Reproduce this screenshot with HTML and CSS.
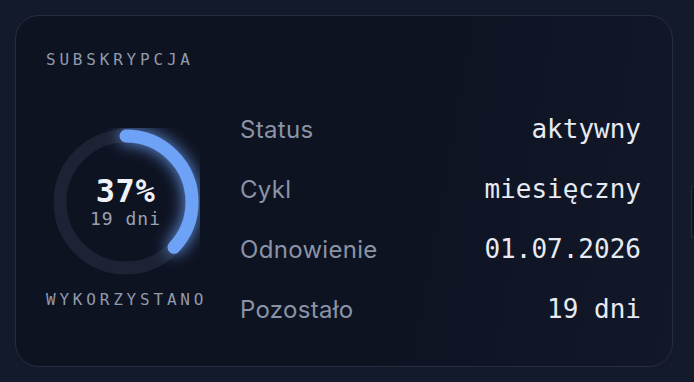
FILE: index.html
```html
<!DOCTYPE html>
<html lang="pl">
<head>
<meta charset="utf-8">
<link rel="stylesheet" href="styles.css">
</head>
<body>
<div class="card">
  <div class="title">SUBSKRYPCJA</div>
  <div class="body">
    <div class="usage">
      <div class="ring">
        <svg width="148" height="148" viewBox="0 0 148 148">
          <defs>
            <filter id="glow" x="-50%" y="-50%" width="200%" height="200%">
              <feGaussianBlur stdDeviation="8" result="b"/>
              <feMerge><feMergeNode in="b"/><feMergeNode in="SourceGraphic"/></feMerge>
            </filter>
          </defs>
          <circle cx="74" cy="74" r="66" fill="none" stroke="#1d2335" stroke-width="13"/>
          <circle cx="74" cy="74" r="66" fill="none" stroke="#6ea2f7" stroke-width="13" stroke-linecap="round" stroke-dasharray="153.4 500" transform="rotate(-90 74 74)" filter="url(#glow)"/>
        </svg>
        <div class="ring-text">
          <div class="pct">37%</div>
          <div class="days">19 dni</div>
        </div>
      </div>
      <div class="caption">WYKORZYSTANO</div>
    </div>
    <div class="rows">
      <div class="row"><span class="label">Status</span><span class="value">aktywny</span></div>
      <div class="row"><span class="label">Cykl</span><span class="value">miesięczny</span></div>
      <div class="row"><span class="label">Odnowienie</span><span class="value">01.07.2026</span></div>
      <div class="row"><span class="label">Pozostało</span><span class="value">19 dni</span></div>
    </div>
  </div>
</div>
<div class="peek"></div>
</body>
</html>
```
FILE: styles.css
```css
html, body {
  margin: 0;
  padding: 0;
}
body {
  width: 694px;
  height: 382px;
  background: #131a2c;
  overflow: hidden;
  position: relative;
  font-family: "DejaVu Sans Mono", monospace;
}
.card {
  position: absolute;
  left: 15px;
  top: 15px;
  box-sizing: border-box;
  width: 658px;
  height: 352px;
  border: 1px solid #262d40;
  border-radius: 24px;
  background: linear-gradient(100deg, #0e1322 55%, #121829 100%);
  padding: 34px 31px 0 30px;
}
.title {
  font-size: 16px;
  letter-spacing: 3.8px;
  color: #909aac;
  line-height: 20px;
}
.body {
  display: flex;
  align-items: center;
  gap: 36px;
  margin-top: 29px;
}
.usage {
  width: 158px;
  display: flex;
  flex-direction: column;
  align-items: center;
}
.ring {
  position: relative;
  width: 148px;
  height: 148px;
  margin-left: 1px;
}
.ring svg {
  display: block;
}
.ring-text {
  position: absolute;
  inset: 0;
  display: flex;
  flex-direction: column;
  align-items: center;
  justify-content: center;
  padding-bottom: 3px;
}
.pct {
  font-weight: bold;
  font-size: 32px;
  line-height: 36px;
  color: #eef1f7;
  letter-spacing: 0.5px;
}
.days {
  font-size: 18px;
  line-height: 20px;
  color: #9aa2b3;
  letter-spacing: 1px;
}
.caption {
  margin-top: 14px;
  font-size: 16px;
  letter-spacing: 3.8px;
  color: #909aac;
  line-height: 20px;
  align-self: flex-start;
}
.rows {
  flex: 1;
  display: flex;
  flex-direction: column;
}
.row {
  height: 60px;
  display: flex;
  align-items: center;
  justify-content: space-between;
}
.label {
  font-family: Inter, "Noto Sans", sans-serif;
  font-size: 24px;
  letter-spacing: 0.3px;
  color: #8a93a7;
}
.value {
  font-size: 26px;
  color: #e7eaf1;
}
.peek {
  position: absolute;
  left: 691px;
  top: 185px;
  width: 2px;
  height: 51px;
  border: 1px solid #262d40;
  border-right: none;
  border-radius: 8px 0 0 8px;
  background: #0f1424;
}
```
